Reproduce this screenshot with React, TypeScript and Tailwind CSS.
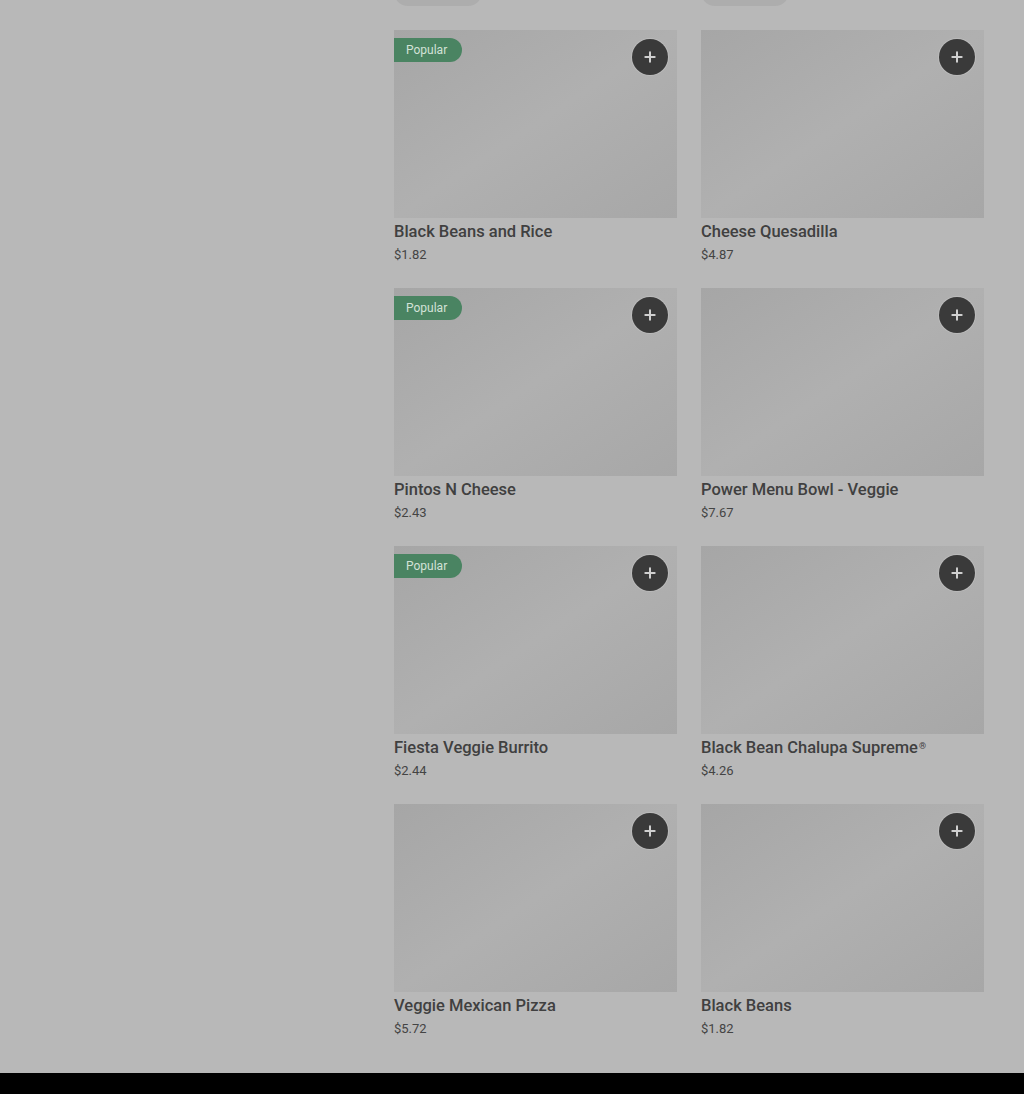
import { Plus } from "lucide-react";

type MenuItem = {
  name: string;
  price: string;
  popular?: boolean;
  registered?: boolean;
};

const ITEMS: MenuItem[] = [
  { name: "Black Beans and Rice", price: "$1.82", popular: true },
  { name: "Cheese Quesadilla", price: "$4.87" },
  { name: "Pintos N Cheese", price: "$2.43", popular: true },
  { name: "Power Menu Bowl - Veggie", price: "$7.67" },
  { name: "Fiesta Veggie Burrito", price: "$2.44", popular: true },
  { name: "Black Bean Chalupa Supreme", price: "$4.26", registered: true },
  { name: "Veggie Mexican Pizza", price: "$5.72" },
  { name: "Black Beans", price: "$1.82" },
];

function MenuCard({ item }: { item: MenuItem }) {
  return (
    <div className="flex flex-col">
      <div className="relative h-[188px] w-full bg-gradient-to-br from-[#a6a6a6] via-[#b0b0b0] to-[#a7a7a7]">
        {item.popular && (
          <span className="absolute left-0 top-2 flex h-6 w-[68px] items-center rounded-r-full bg-[#4a8462] pl-3 text-[12px] text-[#d3e2d8]">
            Popular
          </span>
        )}
        <button className="absolute right-[9px] top-[9px] flex h-9 w-9 items-center justify-center rounded-full bg-[#3a3a3a] text-[#d0d0d0] shadow-[0_0_0_1px_rgba(200,200,200,0.5)]">
          <Plus className="h-4 w-4" strokeWidth={3} />
        </button>
      </div>
      <h3 className="mt-[2px] text-[16.5px] font-medium leading-6 text-[#404040]">
        {item.name}
        {item.registered && <sup className="ml-px text-[9px]">®</sup>}
      </h3>
      <p className="mt-px text-[13px] leading-5 text-[#444]">{item.price}</p>
    </div>
  );
}

export default function App() {
  return (
    <div className="flex min-h-[1094px] flex-col bg-[#b8b8b8] font-['Roboto','Liberation_Sans',sans-serif]">
      <div className="flex-1 pl-[394px] pr-[40px]">
        <div className="flex h-[6px] items-end gap-[219px] overflow-hidden">
          <div className="h-7 w-[88px] shrink-0 rounded-full bg-[#adadad]" />
          <div className="h-7 w-[88px] shrink-0 rounded-full bg-[#adadad]" />
        </div>
        <div className="mt-6 grid grid-cols-2 gap-x-6 gap-y-[23px] pb-[34px]">
          {ITEMS.map((item) => (
            <MenuCard key={item.name} item={item} />
          ))}
        </div>
      </div>
      <div className="h-[22px] bg-black" />
    </div>
  );
}
